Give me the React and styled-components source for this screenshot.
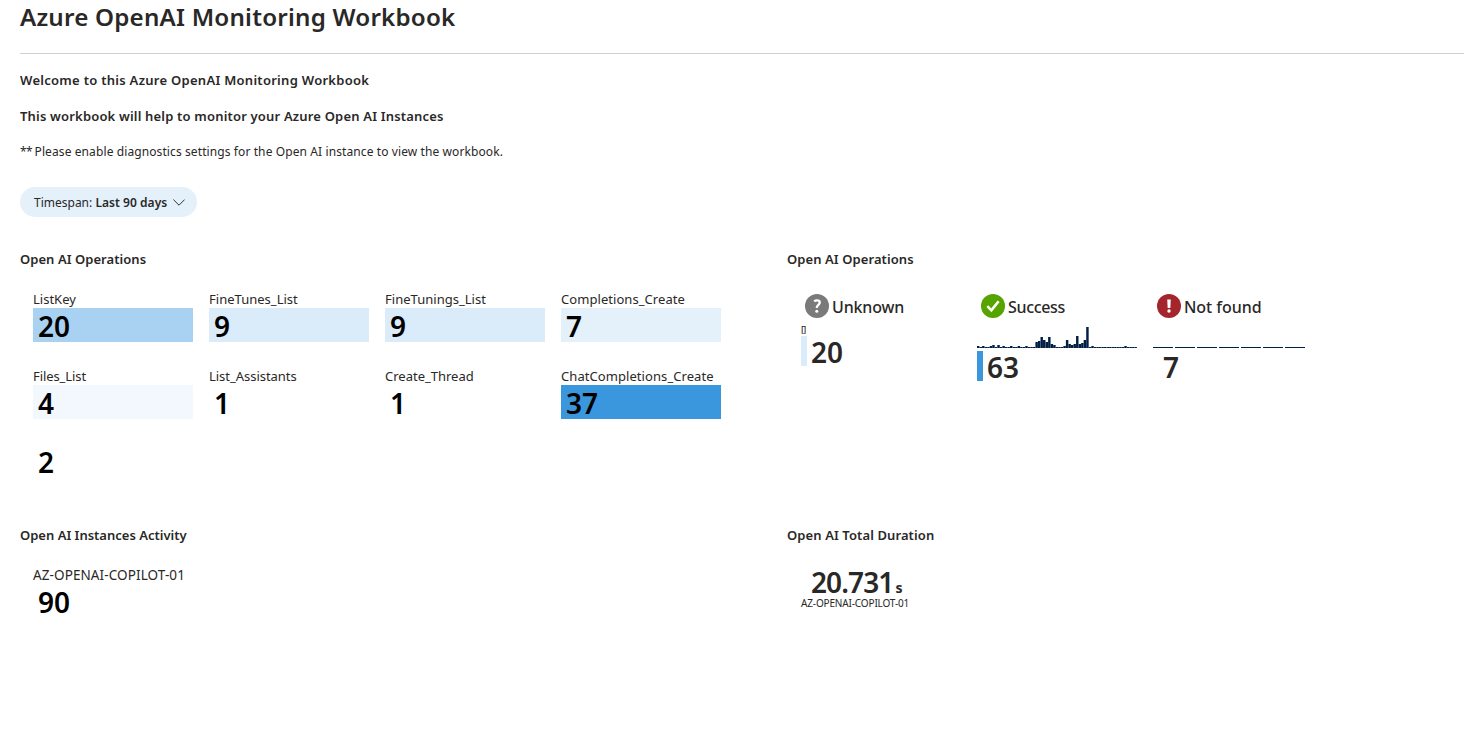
import React from "react";
import styled, { createGlobalStyle } from "styled-components";

const GlobalStyle = createGlobalStyle`
  * { box-sizing: border-box; }
  body {
    margin: 0;
    background: #fff;
    color: #292827;
    font-family: "Noto Sans", "Segoe UI", sans-serif;
    overflow: hidden;
  }
`;

const Page = styled.main`
  padding-left: 20px;
`;

const Title = styled.h1`
  margin: 0;
  height: 53px;
  font-size: 24.2px;
  font-weight: 600;
  line-height: 34px;
  letter-spacing: 0.2px;
`;

const Intro = styled.section`
  display: flex;
  flex-direction: column;
  gap: 16px;
  padding-top: 16px;
  border-top: 1px solid #d0d2d1;
`;

const Lead = styled.p`
  margin: 0;
  font-size: 13px;
  font-weight: 600;
  line-height: 20px;
  letter-spacing: ${(p) => p.$tracking}px;
`;

const Note = styled.p`
  margin: 0;
  font-size: 12px;
  line-height: 20px;
  letter-spacing: 0.1px;
`;

const Stars = styled.span`
  letter-spacing: -0.6px;
`;

const Pill = styled.button`
  display: flex;
  align-items: center;
  width: 177px;
  height: 30px;
  margin: 25px 0 32px;
  padding: 1px 12px 0 14px;
  border: 0;
  border-radius: 15px;
  background: #e4f1fb;
  color: #292827;
  font: 400 12px/20px "Noto Sans", sans-serif;
  white-space: pre;

  b {
    font-weight: 600;
    letter-spacing: 0.04px;
  }

  svg {
    margin: -1px 0 0 auto;
  }
`;

const Row = styled.div`
  display: grid;
  grid-template-columns: 767px 1fr;
  height: ${(p) => p.$height}px;
`;

const Heading = styled.h2`
  margin: 0 0 20px;
  font-size: 13px;
  font-weight: 600;
  line-height: 20px;
  letter-spacing: ${(p) => p.$tracking || 0}px;
`;

const TileGrid = styled.div`
  display: grid;
  grid-template-columns: repeat(4, 160px);
  gap: 24px 16px;
  padding-left: 13px;
`;

const TileLabel = styled.div`
  height: 19px;
  font-size: ${(p) => p.$size || 13}px;
  line-height: 20px;
  letter-spacing: ${(p) => p.$tracking || 0}px;
  white-space: nowrap;
`;

const TileValue = styled.div`
  height: 34px;
  padding-left: 5px;
  background: ${(p) => p.$fill || "transparent"};
  color: #000;
  font-size: 28px;
  font-weight: 600;
  line-height: 36px;

  &:first-child {
    padding-top: 1px;
  }
`;

const StatusGrid = styled.div`
  display: grid;
  grid-template-columns: repeat(3, 160px);
  gap: 16px;
  padding: 5px 0 0 14px;
`;

const StatusHead = styled.div`
  display: flex;
  gap: 3px;
  height: 24px;
  padding-left: 4px;
  font-size: 16px;
  font-weight: 500;
  line-height: 26px;
  letter-spacing: ${(p) => p.$tracking}px;
`;

const EmptyTrend = styled.div`
  height: 18px;
  padding-top: 6px;
  font-size: 9px;
  font-weight: 500;
  line-height: 12px;
  letter-spacing: -0.6px;
`;

const Trend = styled.svg`
  display: block;
  margin: 8px 0 3px;
`;

const StatusValue = styled.div`
  height: 30px;
  padding-left: 4px;
  border-left: 6px solid ${(p) => p.$fill || "transparent"};
  font-size: 28px;
  font-weight: 600;
  line-height: 32px;
`;

const Duration = styled.div`
  padding-left: 14px;
`;

const DurationValue = styled.div`
  display: flex;
  align-items: baseline;
  gap: 2px;
  height: 31px;
  padding-left: 10px;
  font-size: 28px;
  font-weight: 600;
  line-height: 34px;
  letter-spacing: -0.9px;

  small {
    font-size: 14px;
    font-weight: 700;
  }
`;

const DurationName = styled.div`
  font-size: 10px;
  line-height: 14px;
  letter-spacing: -0.15px;
`;

const Chevron = () => (
  <svg width="12" height="7" viewBox="0 0 12 7" fill="none" stroke="#323130">
    <path d="M0.4 0.6L6 6.2L11.6 0.6" />
  </svg>
);

const UnknownIcon = () => (
  <svg width="24" height="24" viewBox="0 0 24 24" fill="none">
    <circle cx="12" cy="12" r="12" fill="#7a7a7a" />
    <path
      d="M9.2 7.4C10 6.6 11 6.3 12.1 6.3C13.7 6.3 14.8 7.1 14.8 8.5C14.8 10.7 11.8 10.9 11.8 13.5V14"
      stroke="#fff"
      strokeWidth="2.3"
    />
    <circle cx="11.8" cy="17.2" r="1.5" fill="#fff" />
  </svg>
);

const SuccessIcon = () => (
  <svg width="24" height="24" viewBox="0 0 24 24" fill="none">
    <circle cx="12" cy="12" r="12" fill="#57a300" />
    <path d="M6.3 12.2L10.4 16.3L17.6 7.2" stroke="#fff" strokeWidth="2.6" />
  </svg>
);

const ErrorIcon = () => (
  <svg width="24" height="24" viewBox="0 0 24 24" fill="none">
    <circle cx="12" cy="12" r="12" fill="#a4262c" />
    <path d="M10.2 5.6H13.8L13.3 14H10.7Z" fill="#fff" />
    <circle cx="12" cy="17" r="1.7" fill="#fff" />
  </svg>
);

const successTrend = [
  2, 1, 2, 1, 1, 2, 3, 1, 3, 1, 2, 1, 1, 2, 1, 1, 2, 1, 1, 2, 1, 1, 1, 6, 7, 11,
  8, 6, 11, 4, 3, 1, 1, 1, 2, 8, 4, 3, 4, 12, 4, 5, 8, 21, 1, 2, 1, 1, 1, 1, 1,
  1, 1, 1, 1, 1, 1, 1, 2, 1, 1, 1, 1,
];
const notFoundTrend = [1, 1, 1, 1, 1, 1, 1];

const BarTrend = ({ data, pitch, bar }) => (
  <Trend width="160" height="22" fill="#011f45">
    {data.map((v, i) => (
      <rect key={i} x={i * pitch} y={22 - v} width={bar} height={v} />
    ))}
  </Trend>
);

const operations = [
  { name: "ListKey", value: 20, fill: "#a9d1f1" },
  { name: "FineTunes_List", value: 9, fill: "#daebfa", tracking: 0.02 },
  { name: "FineTunings_List", value: 9, fill: "#daebfa", tracking: 0.02 },
  { name: "Completions_Create", value: 7, fill: "#e4f1fb", tracking: 0.06 },
  { name: "Files_List", value: 4, fill: "#f2f8fd", tracking: -0.08 },
  { name: "List_Assistants", value: 1, tracking: -0.03 },
  { name: "Create_Thread", value: 1 },
  { name: "ChatCompletions_Create", value: 37, fill: "#3a96dd", tracking: 0.07 },
  { value: 2 },
];

const Tile = ({ name, value, fill, tracking, size }) => (
  <div>
    {name && (
      <TileLabel $tracking={tracking} $size={size}>
        {name}
      </TileLabel>
    )}
    <TileValue $fill={fill}>{value}</TileValue>
  </div>
);

export default function App() {
  return (
    <>
      <GlobalStyle />
      <Page>
        <Title>Azure OpenAI Monitoring Workbook</Title>
        <Intro>
          <Lead $tracking={0.28}>Welcome to this Azure OpenAI Monitoring Workbook</Lead>
          <Lead $tracking={0.18}>
            This workbook will help to monitor your Azure Open AI Instances
          </Lead>
          <Note>
            <Stars>** </Stars>Please enable diagnostics settings for the Open AI
            instance to view the workbook.
          </Note>
        </Intro>
        <Pill>
          Timespan: <b>Last 90 days</b>
          <Chevron />
        </Pill>
        <Row $height={276}>
          <section>
            <Heading $tracking={0.05}>Open AI Operations</Heading>
            <TileGrid>
              {operations.map((op, i) => (
                <Tile key={i} {...op} />
              ))}
            </TileGrid>
          </section>
          <section>
            <Heading $tracking={0.08}>Open AI Operations</Heading>
            <StatusGrid>
              <div>
                <StatusHead $tracking={-0.17}>
                  <UnknownIcon />
                  Unknown
                </StatusHead>
                <EmptyTrend>[]</EmptyTrend>
                <StatusValue $fill="#daebfa">20</StatusValue>
              </div>
              <div>
                <StatusHead $tracking={-0.33}>
                  <SuccessIcon />
                  Success
                </StatusHead>
                <BarTrend data={successTrend} pitch={160 / 63} bar={2.45} />
                <StatusValue $fill="#3a96dd">63</StatusValue>
              </div>
              <div>
                <StatusHead $tracking={-0.05}>
                  <ErrorIcon />
                  Not found
                </StatusHead>
                <BarTrend data={notFoundTrend} pitch={22} bar={20} />
                <StatusValue>7</StatusValue>
              </div>
            </StatusGrid>
          </section>
        </Row>
        <Row $height={205}>
          <section>
            <Heading>Open AI Instances Activity</Heading>
            <TileGrid>
              <Tile name="AZ-OPENAI-COPILOT-01" value={90} size={13.5} tracking={0.1} />
            </TileGrid>
          </section>
          <section>
            <Heading $tracking={0.1}>Open AI Total Duration</Heading>
            <Duration>
              <DurationValue>
                20.731<small>s</small>
              </DurationValue>
              <DurationName>AZ-OPENAI-COPILOT-01</DurationName>
            </Duration>
          </section>
        </Row>
      </Page>
    </>
  );
}
